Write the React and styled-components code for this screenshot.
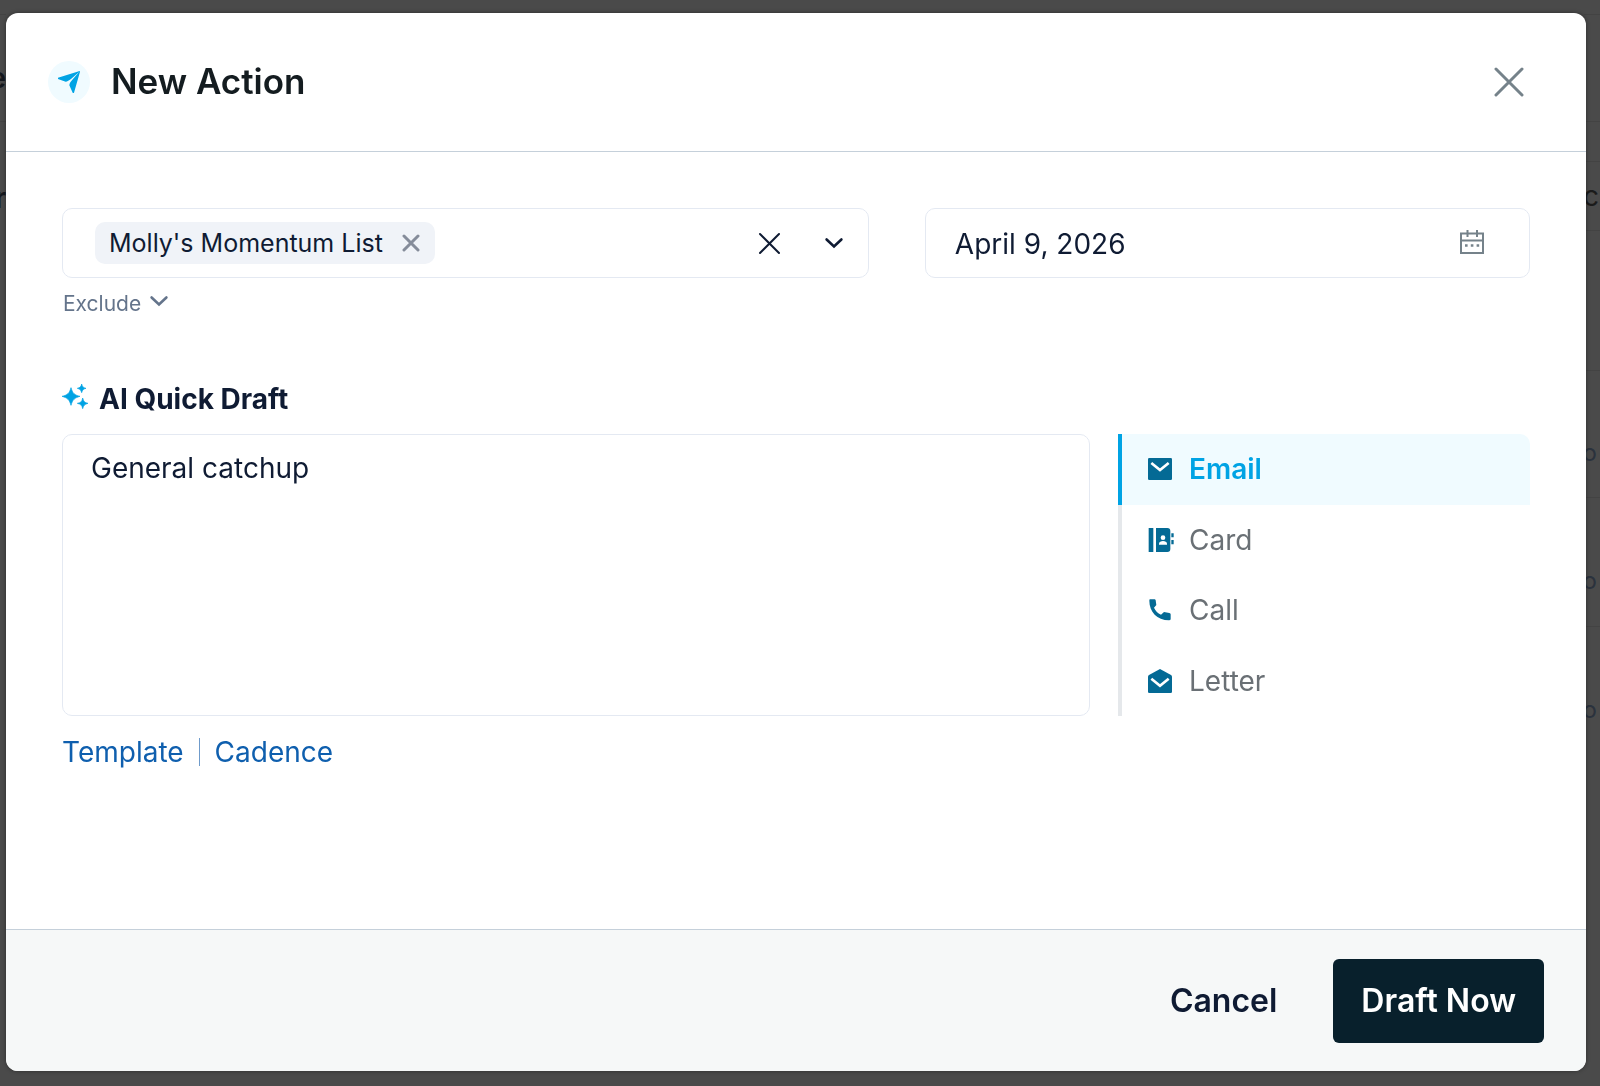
import React, { useState } from 'react';
import styled, { createGlobalStyle } from 'styled-components';

const channels = [
  { id: 'email', label: 'Email', Icon: MailIcon },
  { id: 'card', label: 'Card', Icon: CardIcon },
  { id: 'call', label: 'Call', Icon: PhoneIcon },
  { id: 'letter', label: 'Letter', Icon: LetterIcon },
];

// Icons
function PlaneIcon() {
  return (
    <svg width="22" height="22" viewBox="0 0 66 66" fill="#00a3e4" aria-hidden="true">
      <path d="M65 0 0 20c-1 1-1 3 0 4l23 8c5 0 10-4 16-8L64 2 43 26c-5 6-9 11-9 17l10 22c1 1 3 1 4 0L66 2z" />
    </svg>
  );
}

function CrossIcon({ size, stroke }) {
  return (
    <svg width={size} height={size} viewBox={`0 0 ${size} ${size}`} fill="none" stroke="currentColor" strokeWidth={stroke} strokeLinecap="round" aria-hidden="true">
      <path d={`M2 2 ${size - 2} ${size - 2}M${size - 2} 2 2 ${size - 2}`} />
    </svg>
  );
}

function ChevronIcon() {
  return (
    <svg width="20" height="12" viewBox="0 0 20 12" fill="none" stroke="currentColor" strokeWidth="2.6" strokeLinecap="round" aria-hidden="true">
      <path d="M2.6 2.5l7.4 7 7.4-7" />
    </svg>
  );
}

function CalendarIcon() {
  return (
    <svg width="24" height="24" viewBox="0 0 24 24" fill="none" stroke="currentColor" strokeWidth="2" aria-hidden="true">
      <path d="M1 3.5h22V23H1zM1 10.5h22M7.5 0v7M17 0v7" />
      <path d="M5 15.5h2.6M10.8 15.5h2.6M16.6 15.5h2.6" strokeWidth="2.6" />
    </svg>
  );
}

function SparkleIcon() {
  return (
    <svg width="27" height="25" viewBox="0 0 81 75" fill="#00a3e4" aria-hidden="true">
      <path d="M27 11c5 17 10 22 27 26-17 5-22 10-27 27C22 47 17 42 0 37c17-4 22-9 27-26z" stroke="#00a3e4" strokeWidth="2" />
      <path d="M59 0c2 9 5 11 13 13-8 2-11 5-13 13-2-8-5-11-13-13 8-2 11-4 13-13zM62 42c3 11 6 14 16 16-10 3-13 6-16 16-2-10-5-13-16-16 11-2 14-5 16-16z" stroke="#00a3e4" strokeWidth="2" />
    </svg>
  );
}

function MailIcon() {
  return (
    <svg width="24" height="22" viewBox="0 0 72 66" aria-hidden="true">
      <rect width="72" height="66" rx="4" fill="#046a95" />
      <path d="M10 15l26 21 26-21" fill="none" stroke="#fff" strokeWidth="8" />
    </svg>
  );
}

function CardIcon() {
  return (
    <svg width="26" height="24" viewBox="0 0 78 72" fill="#046a95" aria-hidden="true">
      <path d="M2 0h14v72H2zM24 0h34q9 0 9 9v54q0 9-9 9H24zM70 16h7v12h-7zM70 36h7v13h-7z" />
      <circle cx="45" cy="29" r="7" fill="#fff" />
      <path d="M33 50v-3c0-11 24-11 24 0v3z" fill="#fff" />
    </svg>
  );
}

function PhoneIcon() {
  return (
    <svg width="24" height="22" viewBox="0 0 72 66" fill="#046a95" aria-hidden="true">
      <path d="M6 1h14q2 0 3 3l2 14-7 8c5 10 11 16 21 21l9-8 16 3q4 1 4 4v14q0 4-5 4C27 63 4 39 4 5q0-4 2-4z" />
    </svg>
  );
}

function LetterIcon() {
  return (
    <svg width="24" height="24" viewBox="0 0 72 72" aria-hidden="true">
      <path d="M36 0l33 18q3 2 3 5v45q0 4-4 4H4q-4 0-4-4V23q0-3 3-5z" fill="#046a95" />
      <path d="M10 29l26 21 26-21" fill="none" stroke="#fff" strokeWidth="8" />
    </svg>
  );
}

// Component
function App() {
  const [list, setList] = useState("Molly's Momentum List");
  const [date, setDate] = useState('April 9, 2026');
  const [prompt, setPrompt] = useState('General catchup');
  const [channel, setChannel] = useState('email');

  return (
    <>
      <GlobalStyle />
      <Page aria-hidden="true">
        <LeftEdge>
          <LeftCell $height={107}>e</LeftCell>
          <LeftCell $height={132}>r</LeftCell>
        </LeftEdge>
        <RightEdge>
          <RightCell $height={107} />
          <RightCell $height={40} />
          <RightCell $height={69} $dark>c</RightCell>
          <RightCell $height={140} />
          <RightCell $height={127} $low>o</RightCell>
          <RightCell $height={129} $low>o</RightCell>
          <RightCell $height={129} $low>o</RightCell>
        </RightEdge>
      </Page>
      <Overlay>
        <Modal role="dialog" aria-modal="true" aria-labelledby="modal-title">
          <Header>
            <IconCircle><PlaneIcon /></IconCircle>
            <Title id="modal-title">New Action</Title>
            <CloseButton aria-label="Close"><CrossIcon size={30} stroke={3} /></CloseButton>
          </Header>
          <Body>
            <TopRow>
              <div>
                <Field>
                  {list && (
                    <Tag>
                      {list}
                      <TagRemove aria-label="Remove list" onClick={() => setList('')}>
                        <CrossIcon size={18} stroke={3} />
                      </TagRemove>
                    </Tag>
                  )}
                  <FieldInput aria-label="Recipients" />
                  <FieldActions>
                    <IconButton aria-label="Clear all" onClick={() => setList('')}><CrossIcon size={23} stroke={2} /></IconButton>
                    <IconButton aria-label="Open list"><ChevronIcon /></IconButton>
                  </FieldActions>
                </Field>
                <ExcludeButton>Exclude <ChevronIcon /></ExcludeButton>
              </div>
              <Field>
                <FieldInput aria-label="Date" value={date} onChange={(e) => setDate(e.target.value)} />
                <DateButton aria-label="Choose date"><CalendarIcon /></DateButton>
              </Field>
            </TopRow>
            <DraftLabel htmlFor="prompt"><SparkleIcon />AI Quick Draft</DraftLabel>
            <DraftRow>
              <Prompt id="prompt" value={prompt} onChange={(e) => setPrompt(e.target.value)} />
              <Tabs role="tablist" aria-label="Channel">
                {channels.map(({ id, label, Icon }) => (
                  <Tab key={id} role="tab" aria-selected={channel === id} $active={channel === id} onClick={() => setChannel(id)}>
                    <TabIcon><Icon /></TabIcon>
                    {label}
                  </Tab>
                ))}
              </Tabs>
            </DraftRow>
            <Links>
              <TextLink href="#template">Template</TextLink>
              <Divider />
              <TextLink href="#cadence">Cadence</TextLink>
            </Links>
          </Body>
          <Footer>
            <CancelButton>Cancel</CancelButton>
            <SubmitButton>Draft Now</SubmitButton>
          </Footer>
        </Modal>
      </Overlay>
    </>
  );
}

// Styled components
const GlobalStyle = createGlobalStyle`
  * {
    box-sizing: border-box;
  }
  body {
    margin: 0;
    background: #4a4a4a;
    font-family: Inter, 'Liberation Sans', sans-serif;
    font-optical-sizing: none;
    color: #0f1b33;
  }
  button, input, textarea {
    font: inherit;
    font-optical-sizing: none;
    color: inherit;
    margin: 0;
    padding: 0;
    border: 0;
    background: none;
    outline: none;
  }
  button {
    cursor: pointer;
  }
  svg {
    display: block;
    flex: none;
  }
`;

const Page = styled.div`
  display: flex;
  justify-content: space-between;
  padding-top: 14px;
  font-size: 28px;
`;

const LeftEdge = styled.div`
  width: 6px;
  overflow: hidden;
`;

const LeftCell = styled.div`
  display: flex;
  justify-content: flex-end;
  align-items: center;
  height: ${(props) => props.$height}px;
  padding-top: 20px;
  border-top: 1px solid #434343;
  font-weight: 600;
  color: #15181d;
`;

const RightEdge = styled.div`
  width: 16px;
  overflow: hidden;
`;

const RightCell = styled.div`
  display: flex;
  justify-content: flex-end;
  align-items: center;
  height: ${(props) => props.$height}px;
  padding-top: ${(props) => (props.$low ? '36px' : '0')};
  padding-right: ${(props) => (props.$dark ? '1px' : '3px')};
  border-top: 1px solid #434343;
  font-size: ${(props) => (props.$dark ? '28px' : '24px')};
  color: ${(props) => (props.$dark ? '#1b1b1b' : '#2b323d')};
`;

const Overlay = styled.div`
  position: fixed;
  inset: 0;
  display: flex;
  padding: 13px 14px 15px 6px;
  overflow: auto;
`;

const Modal = styled.div`
  flex: 1;
  display: flex;
  flex-direction: column;
  border-radius: 12px;
  background: #fff;
  box-shadow: 0 0 4px rgba(0, 0, 0, 0.4);
  overflow: hidden;
`;

const Header = styled.header`
  display: flex;
  align-items: center;
  gap: 21px;
  height: 139px;
  padding: 0 58px 0 42px;
  border-bottom: 1px solid #c5d0da;
`;

const IconCircle = styled.span`
  display: flex;
  align-items: center;
  justify-content: center;
  width: 42px;
  height: 42px;
  border-radius: 50%;
  background: #f0fbff;
`;

const Title = styled.h1`
  flex: 1;
  margin: 0;
  padding-bottom: 2px;
  font-size: 35px;
  font-weight: 600;
  color: #141c20;
`;

const CloseButton = styled.button`
  padding: 4px;
  color: #75828a;
`;

const Body = styled.main`
  flex: 1;
  padding: 56px;
`;

const TopRow = styled.div`
  display: grid;
  grid-template-columns: 4fr 3fr;
  align-items: start;
  gap: 56px;
`;

const Field = styled.div`
  display: flex;
  align-items: center;
  height: 70px;
  padding: 0 20px 0 32px;
  border: 1px solid #e4e9f2;
  border-radius: 10px;
  font-size: 28px;
`;

const FieldInput = styled.input`
  flex: 1;
  min-width: 0;
  margin-left: -3px;
  padding-top: 2px;
`;

const Tag = styled.span`
  display: flex;
  align-items: center;
  gap: 16px;
  height: 42px;
  padding: 0 12px 0 14px;
  border-radius: 10px;
  background: #f0f3f8;
  font-size: 25px;
`;

const TagRemove = styled.button`
  padding: 3px;
  color: #858c9a;
`;

const FieldActions = styled.div`
  display: flex;
  gap: 34px;
`;

const IconButton = styled.button`
  display: flex;
  align-items: center;
  padding: 4px 4px 4px 5px;
`;

const DateButton = styled.button`
  padding: 0 25px 2px 0;
  color: #75828a;
`;

const ExcludeButton = styled.button`
  display: flex;
  gap: 8px;
  align-items: center;
  margin-top: 10px;
  padding-left: 1px;
  font-size: 21px;
  line-height: 32px;
  color: #64748b;

  svg {
    margin-bottom: 6px;
  }
`;

const DraftLabel = styled.label`
  display: flex;
  align-items: center;
  gap: 10px;
  margin-top: 59px;
  font-size: 28px;
  font-weight: 700;
  line-height: 40px;

  svg {
    margin-bottom: 6px;
  }
`;

const DraftRow = styled.div`
  display: grid;
  grid-template-columns: 1fr 412px;
  gap: 28px;
  min-height: 282px;
  margin-top: 15px;
`;

const Prompt = styled.textarea`
  padding: 13px 28px;
  border: 1px solid #e4e9f2;
  border-radius: 10px;
  font-size: 28px;
  line-height: 40px;
  resize: none;
`;

const Tabs = styled.div`
  display: flex;
  flex-direction: column;
`;

const Tab = styled.button`
  flex: 1;
  display: flex;
  align-items: center;
  gap: 15px;
  padding-left: 26px;
  border-left: 4px solid ${(props) => (props.$active ? '#00a3e4' : '#e5e8eb')};
  border-radius: ${(props) => (props.$active ? '0 10px 0 0' : '0')};
  background: ${(props) => (props.$active ? '#f0fbff' : 'transparent')};
  font-size: 28px;
  font-weight: ${(props) => (props.$active ? 600 : 400)};
  color: ${(props) => (props.$active ? '#00a3e4' : '#6a7075')};
`;

const TabIcon = styled.span`
  width: 26px;
`;

const Links = styled.nav`
  display: flex;
  align-items: center;
  gap: 15px;
  margin-top: 16px;
  font-size: 28px;
  line-height: 40px;
`;

const TextLink = styled.a`
  color: #0f5fae;
  text-decoration: none;
`;

const Divider = styled.span`
  width: 1px;
  height: 28px;
  background: #6f9bcb;
`;

const Footer = styled.footer`
  display: flex;
  justify-content: flex-end;
  gap: 28px;
  padding: 29px 42px 28px;
  border-top: 1px solid #c5d0da;
  background: #f6f8f8;
`;

const CancelButton = styled.button`
  height: 84px;
  padding: 0 28px 2px;
  border-radius: 6px;
  font-size: 32px;
  font-weight: 600;
`;

const SubmitButton = styled(CancelButton)`
  background: #08202c;
  color: #fff;
`;

export default App;
